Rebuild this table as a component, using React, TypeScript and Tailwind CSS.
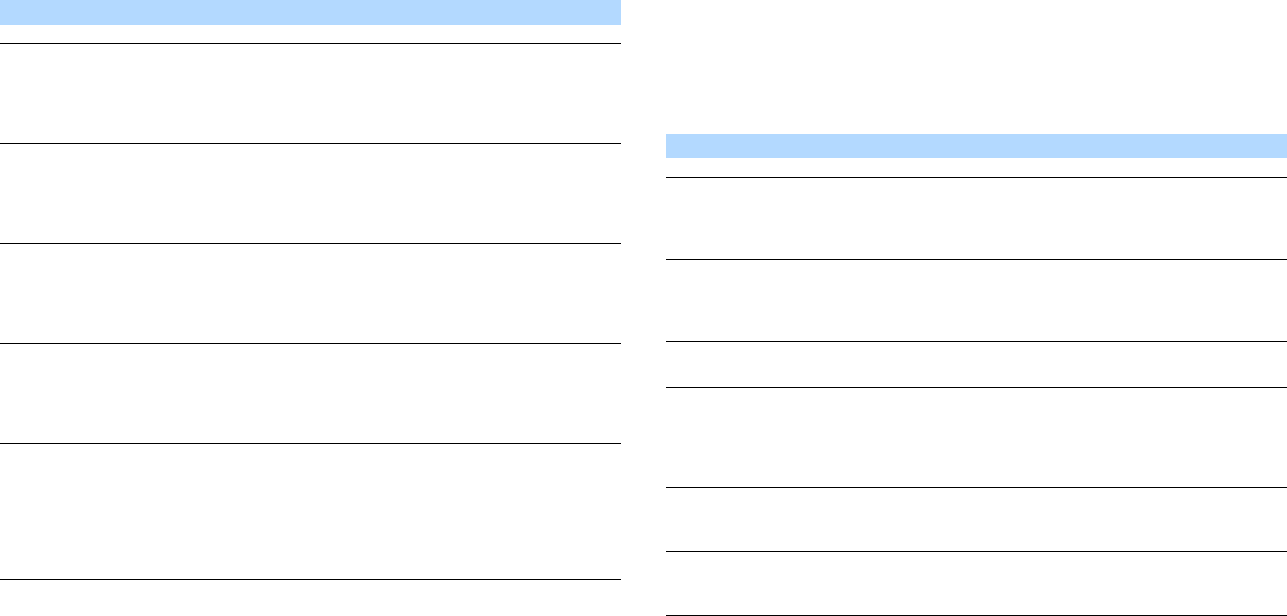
const leftRows = [100, 100, 100, 100, 136];
const rightRows = [82, 82, 46, 100, 64, 64];

type SpecTableProps = {
    rows: number[];
    headerClass: string;
    gapClass: string;
};

function SpecTable({ rows, headerClass, gapClass }: SpecTableProps) {
    return (
        <div className="flex flex-col w-[621px] shrink-0">
            <div className={`bg-[#b3d9ff] ${headerClass}`} />
            <div className={gapClass} />
            <div className="border-t border-black">
                {rows.map((h, i) => (
                    // row heights are fixed per row, taken from the layout
                    <div
                        key={i}
                        className="border-b border-black"
                        style={{ height: h }}
                    />
                ))}
            </div>
        </div>
    );
}

export default function App() {
    return (
        <div className="w-[1287px] h-[616px] overflow-hidden bg-white font-['Liberation_Sans',Arial,sans-serif] flex gap-[45px]">
            <SpecTable rows={leftRows} headerClass="h-[25px]" gapClass="h-[18px]" />
            <div className="pt-[134px]">
                <SpecTable rows={rightRows} headerClass="h-[24px]" gapClass="h-[19px]" />
            </div>
        </div>
    );
}
